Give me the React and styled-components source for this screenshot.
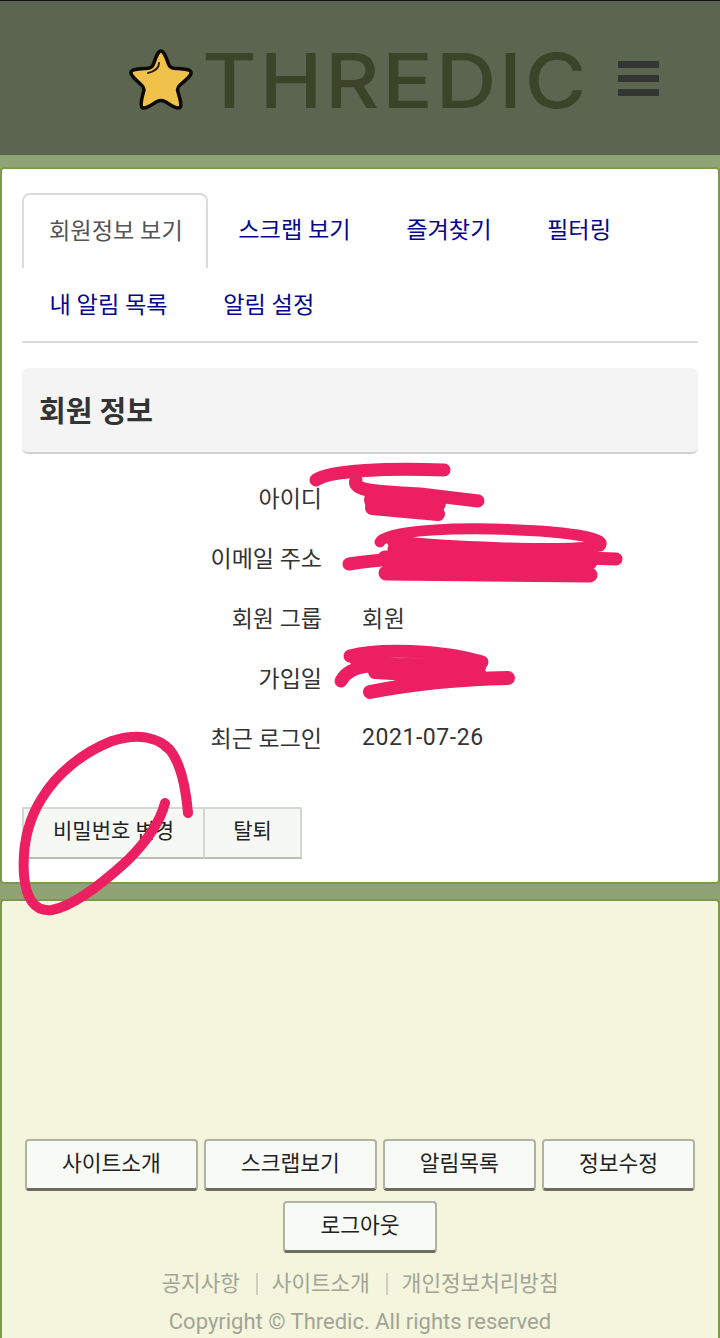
import React from 'react';
import styled, { createGlobalStyle } from 'styled-components';

const tabs = ['회원정보 보기', '스크랩 보기', '즐겨찾기', '필터링', '내 알림 목록', '알림 설정'];
const rows = [
	['아이디', ''],
	['이메일 주소', ''],
	['회원 그룹', '회원'],
	['가입일', ''],
	['최근 로그인', '2021-07-26'],
];
const footerButtons = ['사이트소개', '스크랩보기', '알림목록', '정보수정', '로그아웃'];
const footerLinks = ['공지사항', '사이트소개', '개인정보처리방침'];

const scribbles = [
	{ w: 13, d: 'M316 480 C330 470 390 468 444 470' },
	{ w: 13, d: 'M356 480 C352 490 372 492 420 494 L478 501' },
	{ w: 20, d: 'M374 500 L436 503' },
	{ w: 14, d: 'M372 508 L438 514' },
	{ w: 11, d: 'M380 542 C385 530 460 526 540 531 C590 535 606 540 600 546 C560 552 440 546 392 541' },
	{ w: 13, d: 'M349 564 C400 555 520 556 616 559' },
	{ w: 15, d: 'M395 549 L590 553 M385 558 L590 562 M386 573 L590 575' },
	{ w: 13, d: 'M350 656 C380 648 440 650 482 662' },
	{ w: 13, d: 'M341 681 C350 664 370 662 480 666 M356 660 L480 674' },
	{ w: 14, d: 'M370 692 C410 684 460 679 508 678 M375 672 L480 678' },
];

const App = () => (
	<>
		<GlobalStyle />
		<Page>
			<Header>
				<Logo>
					<svg width="64" height="62" viewBox="0 0 64 62">
						<path
							d="M32 2 C35 2 37 8 39.5 15 C40.5 18 42 19 45 19.3 C53 20 61 20 62 23 C63 26 57 31 51 36 C48.5 38 48 40 49 43 C51 50 53 56 51 58.5 C48 60.5 42 56 36 52.5 C33 51 31 51 28 52.5 C22 56 16 60.5 13 58.5 C11 56 12.5 50 14.5 43 C15.5 40 15 38 12.5 36 C7 31 1 26 2 23 C3 20 11 20 19 19.3 C22 19 23.5 18 24.5 15 C27 8 29 2 32 2 Z"
							fill="#f0c24a"
							stroke="#0c0a06"
							strokeWidth="3.5"
							strokeLinejoin="round"
						/>
						<path d="M30 14 C30 19 27 22 19 24" fill="none" stroke="#2a2110" strokeWidth="2" strokeLinecap="round" />
					</svg>
					<LogoText>THREDIC</LogoText>
				</Logo>
				<Burger>
					<span />
					<span />
					<span />
				</Burger>
			</Header>

			<Card>
				<TabList>
					{tabs.map((tab, index) => (
						<Tab key={tab} $active={index === 0}>
							{tab}
						</Tab>
					))}
				</TabList>

				<PanelHeading>
					<PanelTitle>회원 정보</PanelTitle>
				</PanelHeading>

				<InfoList>
					{rows.map(([label, value]) => (
						<React.Fragment key={label}>
							<InfoLabel>{label}</InfoLabel>
							<InfoValue>{value}</InfoValue>
						</React.Fragment>
					))}
				</InfoList>

				<ButtonGroup>
					<GroupButton>비밀번호 변경</GroupButton>
					<GroupButton>탈퇴</GroupButton>
				</ButtonGroup>
			</Card>

			<Footer>
				<FooterButtons>
					{footerButtons.map((label) => (
						<FooterButton key={label}>{label}</FooterButton>
					))}
				</FooterButtons>
				<FooterLinks>
					{footerLinks.map((label) => (
						<FooterLink key={label}>{label}</FooterLink>
					))}
				</FooterLinks>
				<Copyright>Copyright © Thredic. All rights reserved</Copyright>
			</Footer>

			<Scribbles width="720" height="1338" viewBox="0 0 720 1338">
				{scribbles.map((item) => (
					<path key={item.d} d={item.d} strokeWidth={item.w} />
				))}
				<path
					strokeWidth="10"
					d="M188 813 C186 790 182 765 170 750 C158 737 138 733 112 741 C84 752 58 772 42 798 C28 820 22 845 24 875 C26 898 34 912 52 910 C74 906 104 882 128 860 C146 842 160 822 165 803"
				/>
			</Scribbles>
		</Page>
	</>
);

export default App;

const GlobalStyle = createGlobalStyle`
	html, body {
		margin: 0;
		padding: 0;
	}
	body {
		background: #92a67a;
		font-family: Roboto, "Noto Sans CJK KR", sans-serif;
	}
`;

const Page = styled.div`
	position: relative;
	width: 720px;
	height: 1338px;
	overflow: hidden;
	background: #8fa377;
`;

const Header = styled.header`
	display: flex;
	align-items: center;
	box-sizing: border-box;
	height: 155px;
	padding: 0 61px 0 129px;
	justify-content: space-between;
	background: #5b6550;
	border-top: 1px solid #111;
`;

const Logo = styled.div`
	display: flex;
	align-items: center;
	gap: 9px;
	margin-top: 4px;
`;

const LogoText = styled.span`
	font-family: Inter, sans-serif;
	font-size: 75px;
	font-weight: 500;
	line-height: 1;
	letter-spacing: 2.5px;
	color: #3b4329;
	transform: scaleX(1.12);
	transform-origin: left center;
`;

const Burger = styled.div`
	display: flex;
	flex-direction: column;
	gap: 7px;
	span {
		display: block;
		width: 41px;
		height: 7px;
		border-radius: 1px;
		background: #333534;
	}
`;

const Card = styled.main`
	box-sizing: border-box;
	height: 717px;
	margin-top: 12px;
	padding: 24px 20px 0;
	background: #fff;
	border: 2px solid #7b9a4c;
	border-radius: 4px;
`;

const TabList = styled.nav`
	display: flex;
	flex-wrap: wrap;
	border-bottom: 2px solid #dcdcdc;
`;

const Tab = styled.a`
	box-sizing: border-box;
	height: ${({ $active }) => ($active ? '75px' : '73px')};
	padding: ${({ $active }) => ($active ? '20px 23px 0 25px' : '21px 28px 0 27.5px')};
	font-size: 23.2px;
	line-height: 32px;
	color: ${({ $active }) => ($active ? '#555' : '#05058f')};
	border: ${({ $active }) => ($active ? '2px solid #dcdcdc' : 'none')};
	border-bottom: none;
	border-radius: 8px 8px 0 0;
	margin-right: ${({ $active }) => ($active ? '3px' : '0')};
`;

const PanelHeading = styled.div`
	box-sizing: border-box;
	height: 86px;
	margin-top: 25px;
	padding: 0 17px 3px;
	display: flex;
	align-items: center;
	background: #f4f4f4;
	border-bottom: 2px solid #d2d2d2;
	border-radius: 6px;
`;

const PanelTitle = styled.h3`
	margin: 0;
	font-size: 29px;
	font-weight: 700;
	color: #333;
`;

const InfoList = styled.dl`
	display: grid;
	grid-template-columns: 300px 1fr;
	grid-auto-rows: 60px;
	column-gap: 40px;
	align-items: center;
	margin: 13px 0 0;
`;

const InfoLabel = styled.dt`
	font-size: 23px;
	color: #333;
	text-align: right;
`;

const InfoValue = styled.dd`
	margin: 0;
	font-size: 23px;
	letter-spacing: 0.55px;
	color: #333;
`;

const ButtonGroup = styled.div`
	display: flex;
	margin-top: 40px;
`;

const GroupButton = styled.button`
	height: 52px;
	padding: 0 29px 8px;
	font-family: inherit;
	font-size: 21px;
	color: #222;
	background: #f6f8f3;
	border: 2px solid #d4d7d0;
	border-bottom-color: #bbbdb8;
	& + & {
		margin-left: -2px;
		padding: 0 28px 8px;
	}
`;

const Footer = styled.footer`
	box-sizing: border-box;
	height: 440px;
	margin-top: 15px;
	padding-top: 238px;
	background: #f3f5dc;
	border: 2px solid #7b9a4c;
	border-bottom: none;
	border-radius: 4px 4px 0 0;
`;

const FooterButtons = styled.div`
	display: flex;
	flex-wrap: wrap;
	justify-content: center;
	gap: 10px 6px;
`;

const FooterButton = styled.button`
	box-sizing: border-box;
	height: 52px;
	padding: 0 35px 6px;
	font-family: inherit;
	font-size: 21.5px;
	color: #222;
	background: #f8faf5;
	border: 2px solid #b0b2a4;
	border-bottom: 3px solid #6c6e62;
	border-radius: 4px;
`;

const FooterLinks = styled.div`
	display: flex;
	justify-content: center;
	margin-top: 15px;
	font-size: 21.3px;
	line-height: 32px;
	color: #a2a496;
`;

const FooterLink = styled.a`
	padding: 0 16px;
	& + & {
		background: linear-gradient(#cfd1bd, #cfd1bd) left center / 2px 22px no-repeat;
	}
`;

const Copyright = styled.p`
	margin: 6px 0 0;
	font-size: 22px;
	line-height: 32px;
	text-align: center;
	color: #a2a496;
`;

// the marker scribbles drawn over the screenshot
const Scribbles = styled.svg`
	position: absolute;
	top: 0;
	left: 0;
	pointer-events: none;
	path {
		fill: none;
		stroke: #ec1f62;
		stroke-linecap: round;
		stroke-linejoin: round;
	}
`;
